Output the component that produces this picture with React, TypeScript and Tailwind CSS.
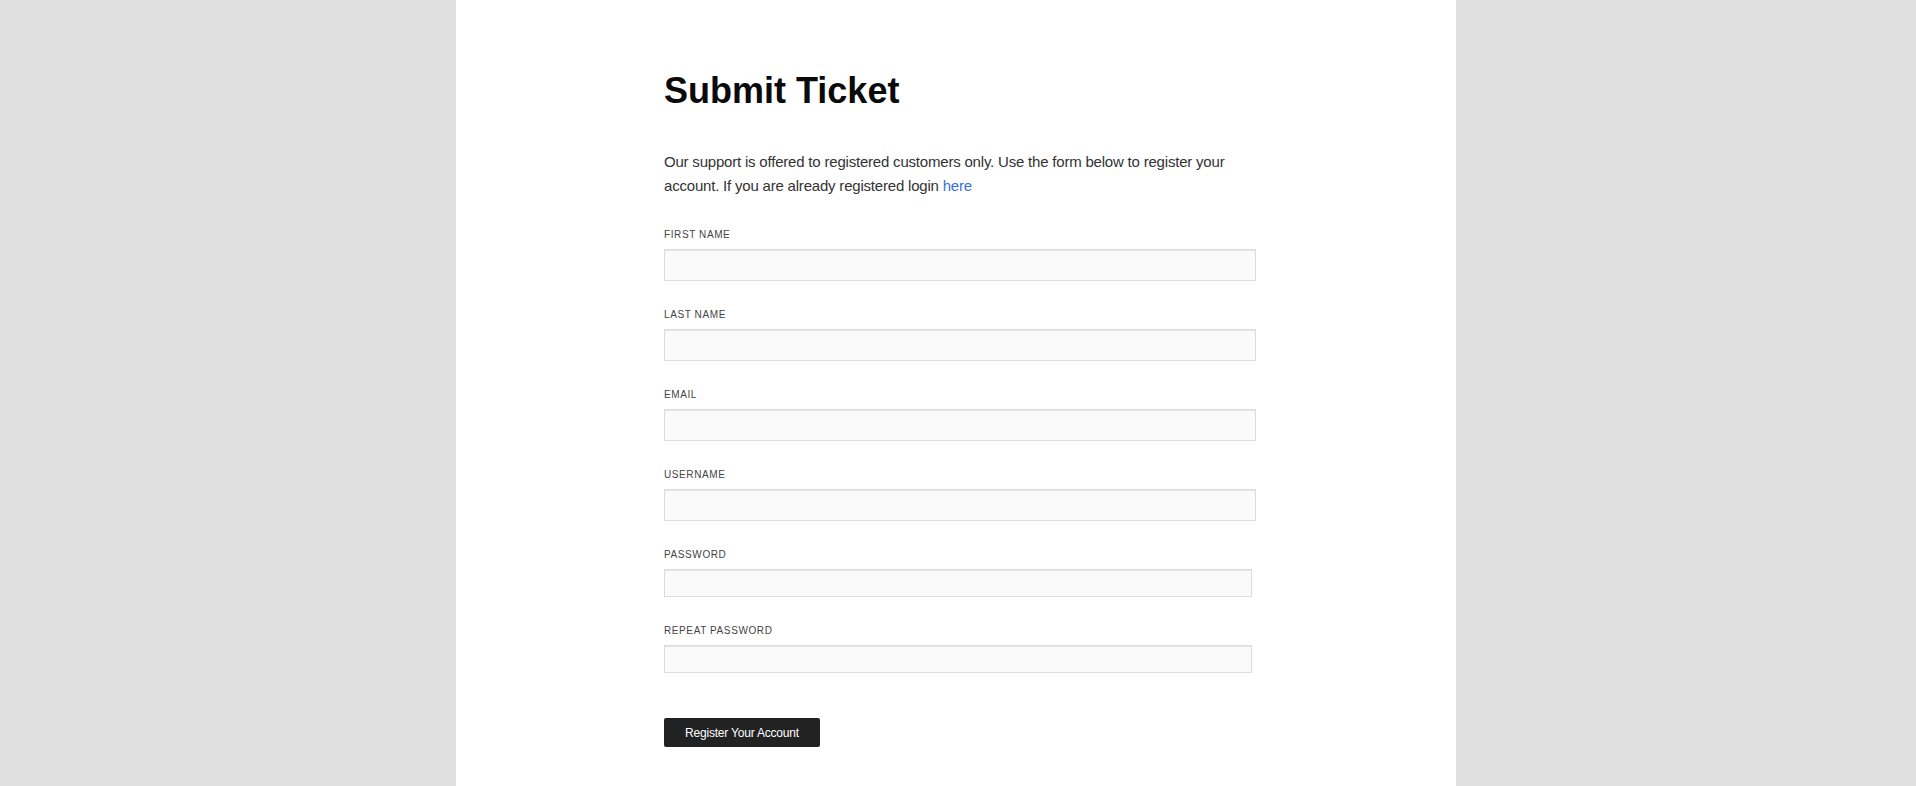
import React from 'react'

const fields = [
  { id: 'first', label: 'First Name', type: 'text', short: false },
  { id: 'last', label: 'Last Name', type: 'text', short: false },
  { id: 'email', label: 'Email', type: 'email', short: false },
  { id: 'username', label: 'Username', type: 'text', short: false },
  { id: 'password', label: 'Password', type: 'password', short: true },
  { id: 'repeat', label: 'Repeat Password', type: 'password', short: true },
]

export default function App() {
  return (
    <div
      className="min-h-screen bg-[#e0e0e0] flex justify-center pr-[4px]"
      style={{ fontFamily: '"Liberation Sans", Arial, Helvetica, sans-serif' }}
    >
      {/* Page */}
      <div className="w-[1000px] bg-white pl-[208px] pt-[71px] pb-[39px]">
        <div className="w-[600px]">
          <h1 className="text-[36px] leading-[40px] font-bold text-[#0a0a0a]">Submit Ticket</h1>

          <p className="mt-[39px] text-[15px] leading-[24px] text-[#333] tracking-[-0.2px]">
            Our support is offered to registered customers only. Use the form below to register your account. If you
            are already registered login{' '}
            <a href="#" className="text-[#3a72d8]">
              here
            </a>
          </p>

          <form className="mt-[31px] flex flex-col" onSubmit={(e) => e.preventDefault()}>
            {fields.map((f, i) => (
              <div key={f.id} className={i === 0 ? '' : 'mt-[28px]'}>
                <label
                  htmlFor={f.id}
                  className="block text-[10px] leading-[12px] uppercase tracking-[0.6px] text-[#444] mb-[8px]"
                >
                  {f.label}
                </label>
                <input
                  id={f.id}
                  type={f.type}
                  className={
                    f.short
                      ? 'block w-[588px] h-[28px] bg-[#fafafa] border border-[#dcdcdc] shadow-[inset_0_1px_0_#e4e4e4] outline-none px-2 text-[13px]'
                      : 'block w-[592px] h-[32px] bg-[#fafafa] border border-[#dcdcdc] shadow-[inset_0_1px_0_#e4e4e4] outline-none px-2 text-[13px]'
                  }
                />
              </div>
            ))}

            <div className="mt-[45px]">
              <button
                type="submit"
                className="h-[29px] w-[156px] rounded-[2px] bg-[#222] text-white text-[12px] tracking-[-0.2px]"
              >
                Register Your Account
              </button>
            </div>
          </form>
        </div>
      </div>
    </div>
  )
}
